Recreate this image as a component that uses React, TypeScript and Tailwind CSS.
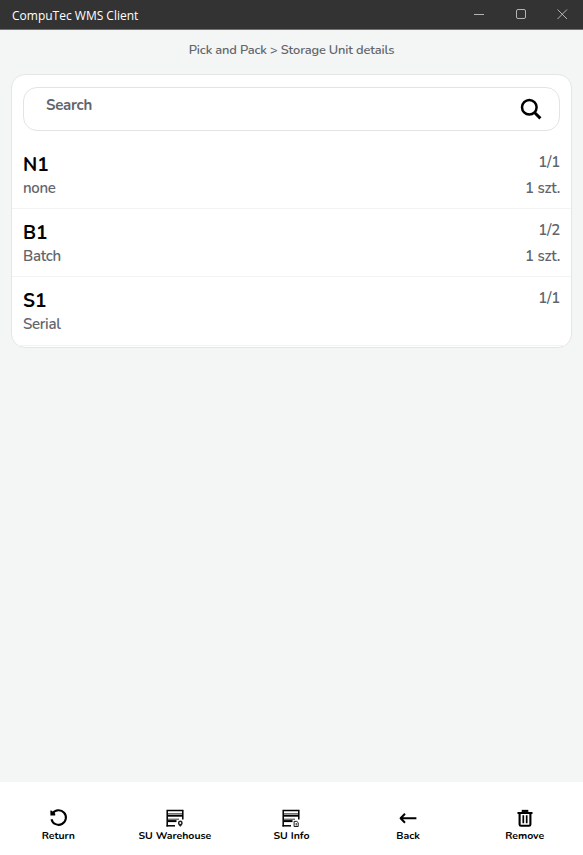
import React from "react";

const nunito = "font-['Nunito','Open_Sans',sans-serif]";

const items = [
  { code: "N1", kind: "none", count: "1/1", qty: "1 szt." },
  { code: "B1", kind: "Batch", count: "1/2", qty: "1 szt." },
  { code: "S1", kind: "Serial", count: "1/1", qty: "" },
];

function ReturnIcon() {
  return (
    <svg width="20" height="20" viewBox="0 0 20 20" fill="none" stroke="#000" strokeWidth="2.1">
      <path d="M4.6 5.4A7.3 7.3 0 1 1 3.5 11.2" />
      <path d="M2.4 2.4H3.4L7.2 5.4V7.4H2.4Z" fill="#000" stroke="none" />
    </svg>
  );
}

function RackIcon({ children }: { children: React.ReactNode }) {
  return (
    <svg width="20" height="20" viewBox="0 0 20 20" fill="none" stroke="#000">
      <path d="M2.2 18.5V2.4H17.8V11.5" strokeWidth="1.5" />
      <path d="M2 5.7H18" strokeWidth=".7" />
      <path d="M2 7.7H18" strokeWidth="2" />
      <path d="M2 11.2H14" strokeWidth=".8" />
      <path d="M3 13.1H11.5" strokeWidth="2" />
      <path d="M1.5 17.8H10" strokeWidth="1.5" />
      {children}
    </svg>
  );
}

function WarehouseIcon() {
  return (
    <RackIcon>
      <path d="M15.3 18.8C13.6 17 12.9 16 12.9 14.9A2.4 2.4 0 0 1 17.7 14.9C17.7 16 17 17 15.3 18.8Z" fill="#222" stroke="none" />
      <circle cx="15.3" cy="15" r=".9" fill="#fff" stroke="none" />
    </RackIcon>
  );
}

function InfoIcon() {
  return (
    <RackIcon>
      <path d="M13.1 13.4H15.8L17.2 14.6V18.5H13.1ZM15.2 15V17.5" strokeWidth=".9" />
    </RackIcon>
  );
}

function BackIcon() {
  return (
    <svg width="20" height="20" viewBox="0 0 20 20" fill="none" stroke="#000" strokeWidth="2" strokeLinejoin="round">
      <path d="M2.6 10.3H18.4M7 5.8L2.6 10.3L7 14.8" />
    </svg>
  );
}

function RemoveIcon() {
  return (
    <svg width="20" height="20" viewBox="0 0 20 20" fill="none" stroke="#000" strokeWidth="2.1">
      <path d="M2.5 5H17.5M4.6 5V16.4Q4.6 17.8 6 17.8H14Q15.4 17.8 15.4 16.4V5" />
      <path d="M6.7 2.9H13.3" />
      <path d="M8.3 7.3V15.3M11.7 7.3V15.3" strokeWidth="1.7" />
    </svg>
  );
}

const actions = [
  { label: "Return", Icon: ReturnIcon },
  { label: "SU Warehouse", Icon: WarehouseIcon },
  { label: "SU Info", Icon: InfoIcon },
  { label: "Back", Icon: BackIcon },
  { label: "Remove", Icon: RemoveIcon },
];

export default function App() {
  return (
    <div className={`flex h-[855px] w-[583px] flex-col overflow-hidden bg-[#f4f6f6] text-[#62656b] ${nunito}`}>
      <header className="flex h-[30px] shrink-0 items-center justify-between border-b border-[#777173] bg-[#333] pl-3 font-['Segoe_UI','Open_Sans',sans-serif] text-white">
        <span className="pt-[3px] text-[12px]">CompuTec WMS Client</span>
        <svg width="110" height="29" viewBox="0 0 110 29" fill="none" stroke="#b4b4b4" strokeWidth="1">
          <path d="M1 14.5H11" />
          <rect x="43.5" y="9.5" width="9" height="9" rx="1.5" />
          <path d="M84.5 9.5L94 19M94 9.5L84.5 19" />
        </svg>
      </header>
      <div className="flex h-[44px] shrink-0 items-center justify-center pb-[2px] text-[12.8px] font-semibold tracking-[-0.14px]">
        <span className="whitespace-nowrap">Pick and Pack &gt; Storage Unit details</span>
      </div>
      <main className="mx-[11px] h-[274px] shrink-0 rounded-[14px] border border-[#e4e6e6] bg-white pt-3">
        <div className="mx-[11px] flex h-[44px] justify-between rounded-[14px] border border-[#e2e4e4] pl-[22px] pr-[17px]">
          <span className="pt-[7px] text-[15px] leading-5 font-bold tracking-[-0.25px]">Search</span>
          <svg className="mt-[10px]" width="22" height="22" viewBox="0 0 22 22" fill="none" stroke="#000" strokeWidth="2.5">
            <circle cx="9.3" cy="9.3" r="7.3" />
            <path d="M14.5 14.5L20.4 20.4" strokeWidth="3" />
          </svg>
        </div>
        <ul className="mt-[10px]">
          {items.map((item) => (
            <li key={item.code} className="flex h-[68px] justify-between border-b border-[#f2f3f3] px-[11px] pt-[8px] last:h-[69px]">
              <div>
                <div className="pt-[4px] text-[19px] leading-6 font-bold text-black">{item.code}</div>
                <div className="pt-[1px] text-[15px] leading-5 font-semibold tracking-[-0.3px]">{item.kind}</div>
              </div>
              <div className="text-right text-[15px] leading-[26px] font-semibold tracking-[-0.25px]">
                <div>{item.count}</div>
                <div>{item.qty}</div>
              </div>
            </li>
          ))}
        </ul>
      </main>
      <nav className="mt-auto grid h-[73px] shrink-0 grid-cols-5 bg-white pt-[26px] text-black">
        {actions.map(({ label, Icon }) => (
          <button key={label} className="flex flex-col items-center">
            <Icon />
            <span className="whitespace-nowrap text-[10.5px] leading-4 font-bold">{label}</span>
          </button>
        ))}
      </nav>
    </div>
  );
}
